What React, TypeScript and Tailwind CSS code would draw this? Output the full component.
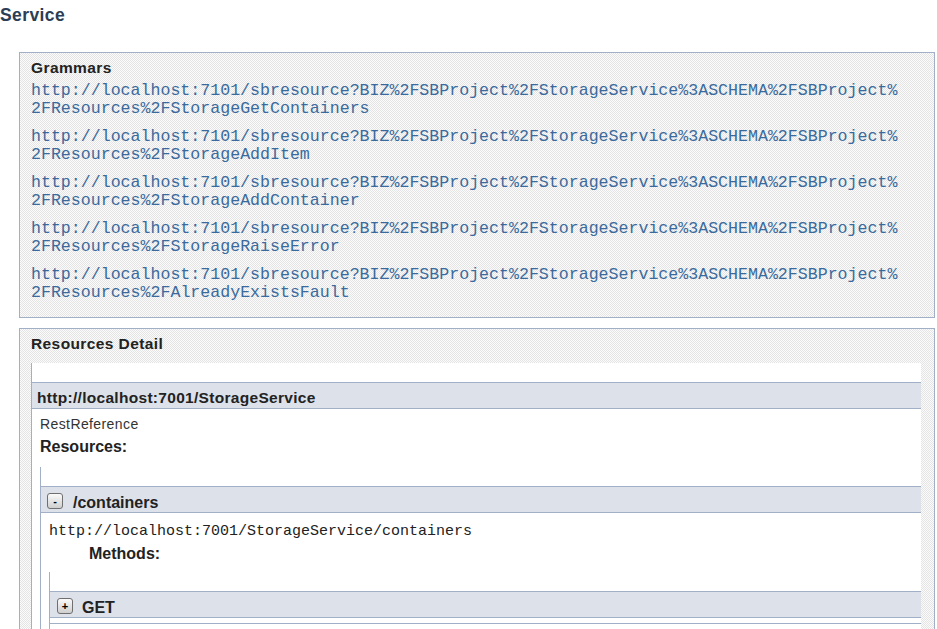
import React from "react";

const grammars = [
  "StorageGetContainers",
  "StorageAddItem",
  "StorageAddContainer",
  "StorageRaiseError",
  "AlreadyExistsFault",
];

const checker =
  "bg-[conic-gradient(#e4e4e4_25%,#fbfbfb_0_50%,#e4e4e4_0_75%,#fbfbfb_0)] bg-[length:2px_2px]";

function ToggleButton({ sign }: { sign: string }) {
  return (
    <span className="flex h-[16px] w-[16px] items-center justify-center rounded-[3px] border border-[#6f6f6f] bg-gradient-to-b from-[#fbfbfb] to-[#cfcfcf] text-[11px] leading-none text-black font-['Liberation_Sans',sans-serif]">
      {sign}
    </span>
  );
}

export default function App() {
  return (
    <div className="min-h-[629px] w-[937px] overflow-hidden bg-white font-['Liberation_Sans',Arial,sans-serif] text-[#222]">
      {/* Page title */}
      <h1 className="h-[52px] pt-[5px] text-[17.5px] font-bold leading-[20px] tracking-[0.4px] text-[#2c3e55]">
        Service
      </h1>

      <div className="ml-[19px] w-[916px]">
        {/* Grammars */}
        <div className={`h-[266px] border border-[#a1b0c6] ${checker} pl-[11px] pt-[6px]`}>
          <div className="text-[15.5px] font-bold leading-[18px] tracking-[0.4px] text-[#222]">Grammars</div>
          <div className="mt-[5px] flex flex-col gap-[10px]">
            {grammars.map((g) => (
              <a
                key={g}
                className="block font-['Liberation_Mono','Courier_New',monospace] text-[16.6px] leading-[18px] text-[#3a6a9c]"
              >
                http://localhost:7101/sbresource?BIZ%2FSBProject%2FStorageService%3ASCHEMA%2FSBProject%
                <br />
                2FResources%2F{g}
              </a>
            ))}
          </div>
        </div>

        {/* Resources Detail */}
        <div className={`mt-[10px] h-[320px] border border-b-0 border-[#a1b0c6] ${checker} pl-[11px] pr-[13px] pt-[6px]`}>
          <div className="text-[15.5px] font-bold leading-[18px] tracking-[0.4px] text-[#222]">Resources Detail</div>
          <div className="mt-[10px] h-[300px] border-l border-[#a1b0c6] bg-white pt-[19px]">
            <div className="flex h-[27px] items-center border-y border-[#a1b0c6] bg-[#dde1ea] pl-[5px] pt-[4px] text-[15.5px] font-bold tracking-[0.3px] text-[#222]">
              http://localhost:7001/StorageService
            </div>
            <div className="pl-[8px] pt-[6px]">
              <div className="text-[14px] leading-[18px] tracking-[0.4px] text-[#333]">RestReference</div>
              <div className="mt-[5px] text-[16px] font-bold leading-[18px] text-[#222]">Resources:</div>
            </div>

            {/* resource */}
            <div className="mt-[11px] ml-[8px] border-l border-[#a1b0c6] pt-[19px]">
              <div className="flex h-[27px] items-center gap-[10px] border-y border-[#a1b0c6] bg-[#dde1ea] pl-[6px] pt-[3px] text-[16px] font-bold text-[#222]">
                <ToggleButton sign="-" />
                <span className="pt-[3px]">/containers</span>
              </div>
              <div className="pl-[8px] pt-[10px] font-['Liberation_Mono','Courier_New',monospace] text-[15px] leading-[18px] text-[#222]">
                http://localhost:7001/StorageService/containers
              </div>
              <div className="pl-[48px] pt-[4px] text-[16px] font-bold leading-[18px] text-[#222]">Methods:</div>

              {/* method */}
              <div className="mt-[9px] ml-[8px] border-l border-[#a1b0c6] pt-[19px]">
                <div className="flex h-[27px] items-center gap-[9px] border-y border-[#a1b0c6] bg-[#dde1ea] pl-[7px] pt-[3px] text-[16px] font-bold text-[#222]">
                  <ToggleButton sign="+" />
                  <span className="pt-[3px]">GET</span>
                </div>
                <div className="mt-[5px] h-[20px] border-t border-[#a1b0c6]" />
              </div>
            </div>
          </div>
        </div>
      </div>
    </div>
  );
}
